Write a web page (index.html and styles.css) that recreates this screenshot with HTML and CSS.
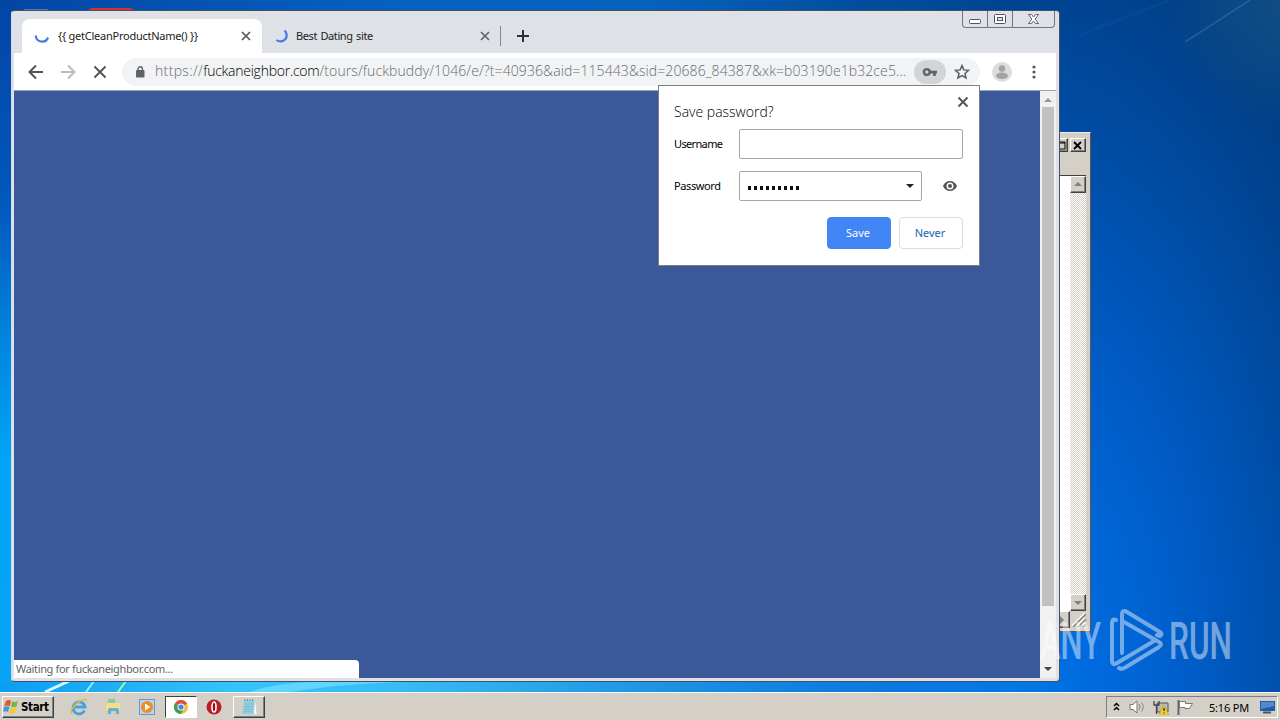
FILE: index.html
```html
<!DOCTYPE html>
<html lang="en">
<head>
    <meta charset="UTF-8">
    <title>Desktop</title>
    <link rel="stylesheet" href="styles.css">
</head>
<body>
<div class="desktop">
    <!-- Wallpaper light streaks and the icons behind the window -->
    <svg class="wallpaper" width="1280" height="692" viewBox="0 0 1280 692">
        <path d="M1185 42L1250 0" stroke="#4b83bd" stroke-width="1.500" opacity=".4"/>
        <path d="M1080 35L1170 0" stroke="#2b70b8" stroke-width="3" opacity=".12"/>
        <path d="M89 10q0-2 4-2h36q4 0 4 2z" fill="#d9302c"/>
        <path d="M24 9.500h24" stroke="#5d78ab"/>
        <path d="M45 692l24-11" stroke="#d9faff" stroke-width="3"/>
        <path d="M86 692l8-11" stroke="#8df0ff" stroke-width="2"/>
        <path d="M118 692l8-11" stroke="#a9f5a5" stroke-width="2"/>
        <path d="M250 692q20-8 60-10h90q-60 2-110 10z" fill="#8beaff" opacity=".5"/>
    </svg>

    <div class="back-window">
        <div class="back-title">
            <span class="classic-btn"><svg width="11" height="9"><path d="M1 1h9v7H1zM1 2h9" fill="none" stroke="#000"/></svg></span>
            <span class="classic-btn"><svg width="10" height="9"><path d="M1 1l7 7M8 1L1 8" stroke="#000" stroke-width="1.800"/></svg></span>
        </div>
        <div class="back-body">
            <div class="back-scroll">
                <span class="classic-btn arrow"><svg width="8" height="4"><path d="M0 4l4-4 4 4z" fill="#808080"/></svg></span>
                <span class="classic-btn arrow"><svg width="8" height="4"><path d="M0 0l4 4 4-4z" fill="#808080"/></svg></span>
            </div>
        </div>
        <div class="back-foot">
            <span class="classic-btn arrow"><svg width="4" height="8"><path d="M0 0l4 4-4 4z" fill="#808080"/></svg></span>
            <svg width="16" height="16"><path d="M2 15L15 2M7 15l8-8M12 15l3-3" stroke="#fff" stroke-width="1.500"/><path d="M3 16L16 3M8 16l8-8M13 16l3-3" stroke="#808080" stroke-width="1.500"/></svg>
        </div>
    </div>

    <div class="browser">
        <div class="tabstrip">
            <div class="tab active">
                <svg class="spinner" width="16" height="16" viewBox="0 0 16 16"><path d="M1.800 7.500a6.300 6.300 0 0 0 12.200 2" fill="none" stroke="#3f79ed" stroke-width="2.200"/></svg>
                <span class="tab-title first">{{ getCleanProductName() }}</span>
                <svg class="close" width="10" height="10"><path d="M1 1l8 8M9 1L1 9" stroke="#54575b" stroke-width="1.700"/></svg>
            </div>
            <div class="tab">
                <svg class="spinner" width="16" height="16" viewBox="0 0 16 16"><path d="M10.500 2.600A5.800 5.800 0 1 1 2.500 12" fill="none" stroke="#3f79ed" stroke-width="2.200"/></svg>
                <span class="tab-title">Best Dating site</span>
                <svg class="close" width="10" height="10"><path d="M1 1l8 8M9 1L1 9" stroke="#5f6368" stroke-width="1.700"/></svg>
            </div>
            <svg class="new-tab" width="12" height="12"><path d="M6 0v12M0 6h12" stroke="#2d3034" stroke-width="2"/></svg>
            <div class="caption">
                <span><svg width="12" height="6"><rect x=".5" y=".5" width="11" height="4" rx="1" fill="#fff" stroke="#52535d"/></svg></span>
                <span><svg width="12" height="11"><rect x=".5" y=".5" width="11" height="9" rx="1" fill="#fff" stroke="#52535d"/><rect x="3.500" y="3.500" width="5" height="3" fill="#dee1e6" stroke="#52535d"/></svg></span>
                <span class="wide"><svg width="13" height="11" viewBox="0 0 13 11"><path d="M1.500.5h3l2 2.500 2-2.500h3L8.200 5l3.300 4.500h-3l-2-2.500-2 2.500h-3L4.800 5z" fill="#fff" stroke="#62636c"/></svg></span>
            </div>
        </div>

        <div class="toolbar">
            <svg width="16" height="16" viewBox="0 0 16 16"><path d="M15 8H2M8 1.500L1.500 8 8 14.500" fill="none" stroke="#505357" stroke-width="2"/></svg>
            <svg width="16" height="16" viewBox="0 0 16 16"><path d="M1 8h13M8 1.500L14.500 8 8 14.500" fill="none" stroke="#b9bbbd" stroke-width="2"/></svg>
            <svg width="16" height="16" viewBox="0 0 16 16"><path d="M2.500 2.500l11 11M13.500 2.500l-11 11" stroke="#505357" stroke-width="1.900"/></svg>
            <div class="omnibox">
                <svg class="lock" width="10" height="12" viewBox="0 0 10 12"><rect x="1" y="4" width="8.500" height="7.500" rx="1" fill="#5f6368"/><path d="M3 5V3a2.200 2.200 0 0 1 4.400 0v2" fill="none" stroke="#5f6368" stroke-width="1.400"/></svg>
                <span class="url"><span class="scheme">https://</span><b>fuckaneighbor.com</b>/tours/fuckbuddy/1046/e/?t=40936&amp;aid=115443&amp;sid=20686_84387&amp;xk=b03190e1b32ce5...</span>
                <span class="key"><svg width="16" height="10" viewBox="0 0 16 10"><circle cx="4.800" cy="5" r="2.900" fill="none" stroke="#606469" stroke-width="2.400"/><path d="M8 3.800h7v2.600h-1.200V9h-2.600V6.400H8z" fill="#606469"/></svg></span>
                <svg class="star" width="16" height="16" viewBox="0 0 16 16"><path d="M8 1.600l1.850 4.300 4.650.4-3.500 3.100 1.050 4.600L8 11.600 3.950 14 5 9.400 1.500 6.300l4.650-.4z" fill="none" stroke="#5a5d61" stroke-width="1.500"/></svg>
            </div>
            <svg class="avatar" width="20" height="20"><circle cx="10" cy="10" r="10" fill="#dcdddd"/><circle cx="10" cy="6.500" r="3.200" fill="#a1a3a5"/><ellipse cx="10" cy="13.800" rx="6" ry="3.200" fill="#a1a3a5"/></svg>
            <svg class="dots" width="4" height="14"><circle cx="2" cy="2" r="1.600" fill="#55585b"/><circle cx="2" cy="7" r="1.600" fill="#55585b"/><circle cx="2" cy="12" r="1.600" fill="#55585b"/></svg>
        </div>

        <div class="content">
            <div class="page"><div class="status"><span>Waiting for fuckaneighbor.com...</span></div></div>
            <div class="scrollbar">
                <svg width="8" height="4"><path d="M0 4l4-4 4 4z" fill="#999"/></svg>
                <div class="thumb"></div>
                <svg width="8" height="4"><path d="M0 0l4 4 4-4z" fill="#454545"/></svg>
            </div>
        </div>
    </div>

    <div class="popup">
        <svg class="popup-close" width="12" height="12"><path d="M1.500 1.500l9 9M10.500 1.500l-9 9" stroke="#56595d" stroke-width="2"/></svg>
        <div class="popup-title"><span>Save password?</span></div>
        <div class="field-row">
            <span class="label">Username</span>
            <div class="field"></div>
        </div>
        <div class="field-row">
            <span class="label pass">Password</span>
            <div class="field select">
                <div class="mask"><i></i><i></i><i></i><i></i><i></i><i></i><i></i><i></i><i></i></div>
                <svg width="8" height="4"><path d="M0 0h8L4 4z" fill="#222"/></svg>
            </div>
            <svg class="eye" width="14" height="10" viewBox="0 0 14 10"><path fill-rule="evenodd" d="M0 5C2.800-1.600 11.200-1.600 14 5 11.200 11.600 2.800 11.600 0 5zM7 1.500a3.500 3.500 0 1 0 0 7 3.500 3.500 0 0 0 0-7z" fill="#515458"/><circle cx="7" cy="5" r="2" fill="#515458"/></svg>
        </div>
        <div class="buttons">
            <div class="btn primary">Save</div>
            <div class="btn">Never</div>
        </div>
    </div>

    <svg class="watermark" width="204" height="70" viewBox="0 0 204 70">
        <g fill="#fff">
            <text class="wm-text" x="2" y="54" textLength="61" lengthAdjust="spacingAndGlyphs">ANY</text>
            <text class="wm-text" x="131" y="54" textLength="63" lengthAdjust="spacingAndGlyphs">RUN</text>
        </g>
        <g fill="none" stroke="#fff" stroke-width="4" stroke-linejoin="round" stroke-linecap="round">
            <path d="M79 33M77 34M78 15q-4-2-4 3v37q0 6 5 3l37-22"/>
            <path d="M84 48V10q0-6 5-3l33 20q3 2 0 4l-3-1"/>
            <path d="M86 17l35 20q4 2 0 5L88 62q-4 3-7 1"/>
        </g>
    </svg>

    <div class="taskbar">
        <div class="start">
            <svg width="17" height="16" viewBox="0 0 17 16"><path d="M3 2q3-2 5 0L6.800 7q-3-1-5.500 0z" fill="#e8562a"/><path d="M9 2.500q3 1 6-.5l-1.500 5.500q-3 1-5.500 0z" fill="#7cb73b"/><path d="M1 8q3-1.500 5.500 0L5 13q-2.500-1.500-5 0z" fill="#4299dc"/><path d="M7.600 8.500q3 1 5.600 0L12 14q-3 1-5.700-.5z" fill="#f5c92f"/></svg>
            <span>Start</span>
        </div>
        <div class="quick">
            <svg width="18" height="18" viewBox="0 0 18 18"><path d="M14.500 12.500a6 6 0 1 1 .5-3.500H4" fill="none" stroke="#43a3dc" stroke-width="2.800"/><path d="M2 15.500C-1 14 4 6 10 3q6-3 6.500-.5" fill="none" stroke="#e2b93c" stroke-width="1.500"/></svg>
            <svg width="18" height="18" viewBox="0 0 18 18"><path d="M2 3h5l1 2h7v9H2z" fill="#e9cb69"/><path d="M4 1h7v4H4z" fill="#8bc7ab"/><path d="M2 5h14v8H2z" fill="#f3de8b"/><path d="M4 16v-4q0-2 2-2h7q2 0 2 2v4h-3v-3H7v3z" fill="#66aee0"/></svg>
            <svg width="18" height="18" viewBox="0 0 18 18"><rect x="1.500" y="1.500" width="15" height="15" fill="#b7d5ef" stroke="#5d9fd0"/><circle cx="9" cy="9" r="6" fill="#f18b1d"/><path d="M7 5.500L12.500 9 7 12.500z" fill="#fff"/></svg>
        </div>
        <div class="task pressed">
            <svg width="16" height="16" viewBox="0 0 16 16"><circle cx="8" cy="8" r="7" fill="#eac33d"/><path d="M8 8L1.900 4.500A7 7 0 0 1 14.100 4.500z" fill="#dd4b3e"/><path d="M8 8L1.900 4.500A7 7 0 0 0 8 15l2-4z" fill="#38a057"/><circle cx="8" cy="8" r="3.500" fill="#fff"/><circle cx="8" cy="8" r="2.600" fill="#4d7fe8"/></svg>
        </div>
        <svg class="opera" width="16" height="16" viewBox="0 0 16 16"><circle cx="8" cy="8" r="7.500" fill="#ba1d24"/><ellipse cx="8" cy="8" rx="2" ry="5" fill="#8f1118" stroke="#fff" stroke-width="1.600"/></svg>
        <div class="task">
            <svg width="18" height="18" viewBox="0 0 18 18"><path d="M4 2h11l-1 14H2z" fill="#8fcfe0"/><path d="M15 2l1.500 14H14z" fill="#fff"/><path d="M5 6h8M4.500 8.500H13M4.300 11h8.500M4 13.500h8" stroke="#7fbccd"/><path d="M5 1v2M7.500 1v2M10 1v2M12.500 1v2" stroke="#78969e"/></svg>
        </div>
        <div class="tray">
            <svg width="7" height="10"><path d="M1 4l2.500-2.500L6 4M1 8l2.500-2.500L6 8" fill="none" stroke="#000" stroke-width="1.500"/></svg>
            <svg class="sound" width="17" height="14"><path d="M1 4.500h3L8 1v12L4 9.500H1z" fill="#fff" stroke="#777"/><path d="M10 4q2 3 0 6M12.500 2.500q3.500 4.500 0 9" fill="none" stroke="#888"/></svg>
            <svg class="network" width="16" height="15"><path d="M4 3h11v9H4z" fill="#bbb" stroke="#555"/><path d="M1 1v4h5V1M3.500 5v9" fill="none" stroke="#444" stroke-width="1.300"/><path d="M10.500 5L16 15H6z" fill="#f5d522" stroke="#b69712" stroke-width=".6"/><path d="M11 8v3M11 12.500v1" stroke="#222" stroke-width="1.300"/></svg>
            <svg class="flag" width="17" height="15"><path d="M1.500 0v15" stroke="#666" stroke-width="2"/><path d="M2.500 1.500h6v2h7l-3 5H8v-1H2.500z" fill="#fff" stroke="#777"/></svg>
            <span class="clock">5:16 PM</span>
            <svg width="16" height="14"><path d="M0 1h15v10H0z" fill="#235ba8"/><path d="M1 2h13v4L1 9z" fill="#5389d0"/><path d="M3 12.500h8" stroke="#4b5560" stroke-width="2"/></svg>
        </div>
    </div>
</div>
</body>
</html>
```
FILE: styles.css
```css
body {
    margin: 0;
    font-family: "Noto Sans", sans-serif;
    font-size: 11px;
    color: #222;
}

svg {
    display: block;
    flex: none;
}

.desktop {
    position: relative;
    width: 1280px;
    height: 720px;
    overflow: hidden;
    background:
        linear-gradient(180deg, #0345a5 0, #0258bb 200px, #0088e0 350px, #00a5f5 460px, #08a3f4 680px) 0 0 / 12px 682px no-repeat,
        linear-gradient(90deg, #0b9df2 0, #35c4fa 240px, #37bcf5 400px, rgba(20, 140, 235, 0.8) 800px, rgba(0, 100, 220, 0) 1080px) 0 680px / 1280px 40px no-repeat,
        linear-gradient(90deg, #0345a5 0, #0562c0 400px, #0562bd 650px, rgba(3, 75, 155, 0) 1000px) 0 0 / 1100px 12px no-repeat,
        radial-gradient(circle at 1290px 0, rgba(24, 82, 130, 0.8) 0, rgba(8, 72, 138, 0) 130px),
        radial-gradient(ellipse 380px 760px at 1020px 690px, #0074e4 0, #006ade 20%, #005dc8 45%, #0050ad 68%, #004798 85%, #004088 100%);
}

.wallpaper {
    position: absolute;
    left: 0;
    top: 0;
}

/* Classic style window in the background */
.back-window {
    position: absolute;
    left: 900px;
    top: 132px;
    box-sizing: border-box;
    width: 191px;
    height: 500px;
    padding: 5px 4px 3px;
    display: flex;
    flex-direction: column;
    background: #d4d0c8;
    border: 1px solid #efede7;
    border-right-color: #57564f;
    border-bottom-color: #57564f;
}

.back-title {
    display: flex;
    justify-content: flex-end;
    gap: 2px;
    height: 37px;
}

.classic-btn {
    box-sizing: border-box;
    width: 16px;
    height: 14px;
    display: flex;
    flex: none;
    align-items: center;
    justify-content: center;
    background: #d4d0c8;
    border: 1px solid #fff;
    border-right-color: #404040;
    border-bottom-color: #404040;
    box-shadow: inset -1px -1px #808080;
}

.classic-btn.arrow {
    width: 16px;
    height: 17px;
}

.back-body {
    display: flex;
    justify-content: flex-end;
    height: 436px;
    background: #fff;
    border-top: 1px solid #404040;
}

.back-scroll {
    display: flex;
    flex-direction: column;
    justify-content: space-between;
    width: 16px;
    background: repeating-conic-gradient(#d4d0c8 0 25%, #fff 0 50%) 0 0 / 2px 2px;
}

.back-foot {
    display: flex;
    justify-content: flex-end;
}

/* Browser window */
.browser {
    position: absolute;
    left: 11px;
    top: 10px;
    box-sizing: border-box;
    width: 1049px;
    height: 672px;
    padding: 0 3px 3px 2px;
    display: flex;
    flex-direction: column;
    background: #dee1e6;
    border: 1px solid #465065;
    border-left-color: #d1dce9;
    border-radius: 4px;
}

.tabstrip {
    display: flex;
    align-items: flex-end;
    height: 42px;
}

.tab {
    box-sizing: border-box;
    display: flex;
    align-items: center;
    width: 239px;
    height: 34px;
    padding: 0 11px 0 12px;
}

.tab.active {
    width: 240px;
    margin-left: 8px;
    background: #fff;
    border-radius: 8px 8px 0 0;
}

.tab-title {
    flex: 1;
    margin-left: 6px;
    padding-bottom: 2px;
    white-space: nowrap;
    letter-spacing: -0.4px;
    word-spacing: 1px;
}

.tab-title.first {
    margin-left: 8px;
    letter-spacing: -0.24px;
    word-spacing: 0;
}

.tab + .new-tab {
    box-sizing: content-box;
    border-left: 1px solid #85888d;
    padding: 4px 0 4px 16px;
    margin: 0 0 7px -1px;
}

.caption {
    display: flex;
    align-self: flex-start;
    height: 16px;
    margin: 0 1px 0 auto;
    border: 1px solid #73757d;
    border-top: 0;
    border-radius: 0 0 4px 4px;
}

.caption span {
    width: 24px;
    display: flex;
    align-items: center;
    justify-content: center;
    border-right: 1px solid #73757d;
}

.caption span:first-child {
    padding-top: 5px;
    height: 11px;
}

.caption .wide {
    width: 41px;
    border: 0;
}

.toolbar {
    display: flex;
    align-items: center;
    gap: 16px;
    height: 37px;
    padding-left: 14px;
    background: #fff;
    border-bottom: 1px solid #9ba5b7;
}

.omnibox {
    display: flex;
    align-items: center;
    width: 858px;
    height: 28px;
    margin-left: -2px;
    border-radius: 14px;
    background: #f1f3f4;
}

.lock {
    margin-left: 13px;
}

.url {
    width: 751px;
    margin: 0 8px 0 10px;
    padding-bottom: 2px;
    font-family: "Open Sans", sans-serif;
    font-size: 14px;
    font-weight: 300;
    letter-spacing: 0.09px;
    white-space: nowrap;
    color: #686c71;
}

.scheme {
    letter-spacing: 0.35px;
}

.url b {
    font-weight: 300;
    letter-spacing: -0.25px;
    color: #000;
}

.key {
    display: flex;
    align-items: center;
    justify-content: center;
    width: 32px;
    height: 24px;
    border-radius: 12px;
    background: #d2d4d6;
}

.star {
    margin-left: 8px;
}

.avatar {
    margin-left: -4px;
}

.dots {
    margin-left: 4px;
}

.content {
    display: flex;
    flex: 1;
}

.page {
    display: flex;
    align-items: flex-end;
    width: 1026px;
    background: #3b5998;
}

.status {
    box-sizing: border-box;
    width: 345px;
    height: 18px;
    padding-left: 2px;
    line-height: 17px;
    letter-spacing: -0.34px;
    background: #fff;
    border-radius: 0 4px 0 0;
    color: #606266;
}

.scrollbar {
    box-sizing: border-box;
    display: flex;
    flex: 1;
    flex-direction: column;
    align-items: center;
    padding: 7px 0;
    background: #f1f1f1;
}

.thumb {
    width: 12px;
    height: 499px;
    margin: 5px 0 auto;
    background: #c1c1c1;
}

/* Password bubble */
.popup {
    position: absolute;
    left: 658px;
    top: 85px;
    box-sizing: border-box;
    width: 322px;
    height: 181px;
    padding: 15px 16px 16px 15px;
    background: #fff;
    border: 1px solid #7b7f88;
    color: #000;
}

.popup-close {
    position: absolute;
    right: 10px;
    top: 10px;
}

.popup-title {
    height: 28px;
    line-height: 22px;
    font-family: "Open Sans", sans-serif;
    font-size: 14px;
    font-weight: 300;
}

.field-row {
    display: flex;
    align-items: center;
    height: 30px;
    margin-bottom: 12px;
}

.label {
    width: 65px;
    padding-bottom: 2px;
    letter-spacing: -0.65px;
}

.label.pass {
    letter-spacing: -0.4px;
}

.field {
    box-sizing: border-box;
    width: 224px;
    height: 30px;
    border: 1px solid #a6a6a6;
    border-radius: 2px;
}

.field.select {
    display: flex;
    align-items: center;
    justify-content: space-between;
    width: 183px;
    padding: 0 7px 0 8px;
}

.mask {
    display: flex;
    gap: 3px;
    padding-top: 3px;
}

.mask i {
    width: 3px;
    height: 4px;
    background: #111;
}

.eye {
    margin-left: 21px;
}

.buttons {
    display: flex;
    justify-content: flex-end;
    gap: 8px;
    margin-top: 16px;
}

.btn {
    box-sizing: border-box;
    width: 64px;
    height: 32px;
    padding-right: 2px;
    line-height: 30px;
    text-align: center;
    border: 1px solid #dadce0;
    border-radius: 4px;
    color: #1565b5;
}

.btn.primary {
    background: #4285f4;
    border-color: #4285f4;
    color: #fff;
}

.watermark {
    position: absolute;
    left: 1038px;
    top: 605px;
    opacity: 0.45;
}

.wm-text {
    font-family: Roboto, sans-serif;
    font-size: 52px;
    font-weight: 500;
}

/* Taskbar */
.taskbar {
    position: absolute;
    left: 0;
    bottom: 0;
    box-sizing: border-box;
    width: 1280px;
    height: 28px;
    display: flex;
    align-items: center;
    padding: 1px 2px 0;
    background: #d4d0c8;
    border-top: 1px solid #fff;
}

.start {
    box-sizing: border-box;
    display: flex;
    align-items: center;
    gap: 1px;
    width: 52px;
    height: 22px;
    border: 1px solid #fff;
    border-right-color: #404040;
    border-bottom-color: #404040;
    box-shadow: inset -1px -1px #808080;
    font-family: "DejaVu Sans Condensed", "DejaVu Sans", sans-serif;
    font-size: 11.5px;
    font-weight: bold;
    letter-spacing: -0.35px;
    color: #000;
}

.quick {
    display: flex;
    gap: 16px;
    margin: 0 9px 0 16px;
}

.task {
    box-sizing: border-box;
    display: flex;
    align-items: center;
    justify-content: center;
    width: 32px;
    height: 22px;
    border: 1px solid #fff;
    border-right-color: #404040;
    border-bottom-color: #404040;
    box-shadow: inset -1px -1px #808080;
}

.task.pressed {
    background: #fff;
    border-color: #404040 #fff #fff #404040;
    box-shadow: none;
}

.opera {
    margin: 0 11px 0 9px;
}

.tray {
    box-sizing: border-box;
    display: flex;
    align-items: center;
    width: 172px;
    height: 22px;
    margin-left: auto;
    padding-left: 6px;
    border: 1px solid #808080;
    border-right-color: #fff;
    border-bottom-color: #fff;
}

.sound {
    margin-left: 9px;
}

.network {
    margin-left: 7px;
}

.flag {
    margin-left: 8px;
}

.clock {
    width: 51px;
    margin-left: 15px;
    white-space: nowrap;
    letter-spacing: -0.2px;
    color: #000;
}
```
